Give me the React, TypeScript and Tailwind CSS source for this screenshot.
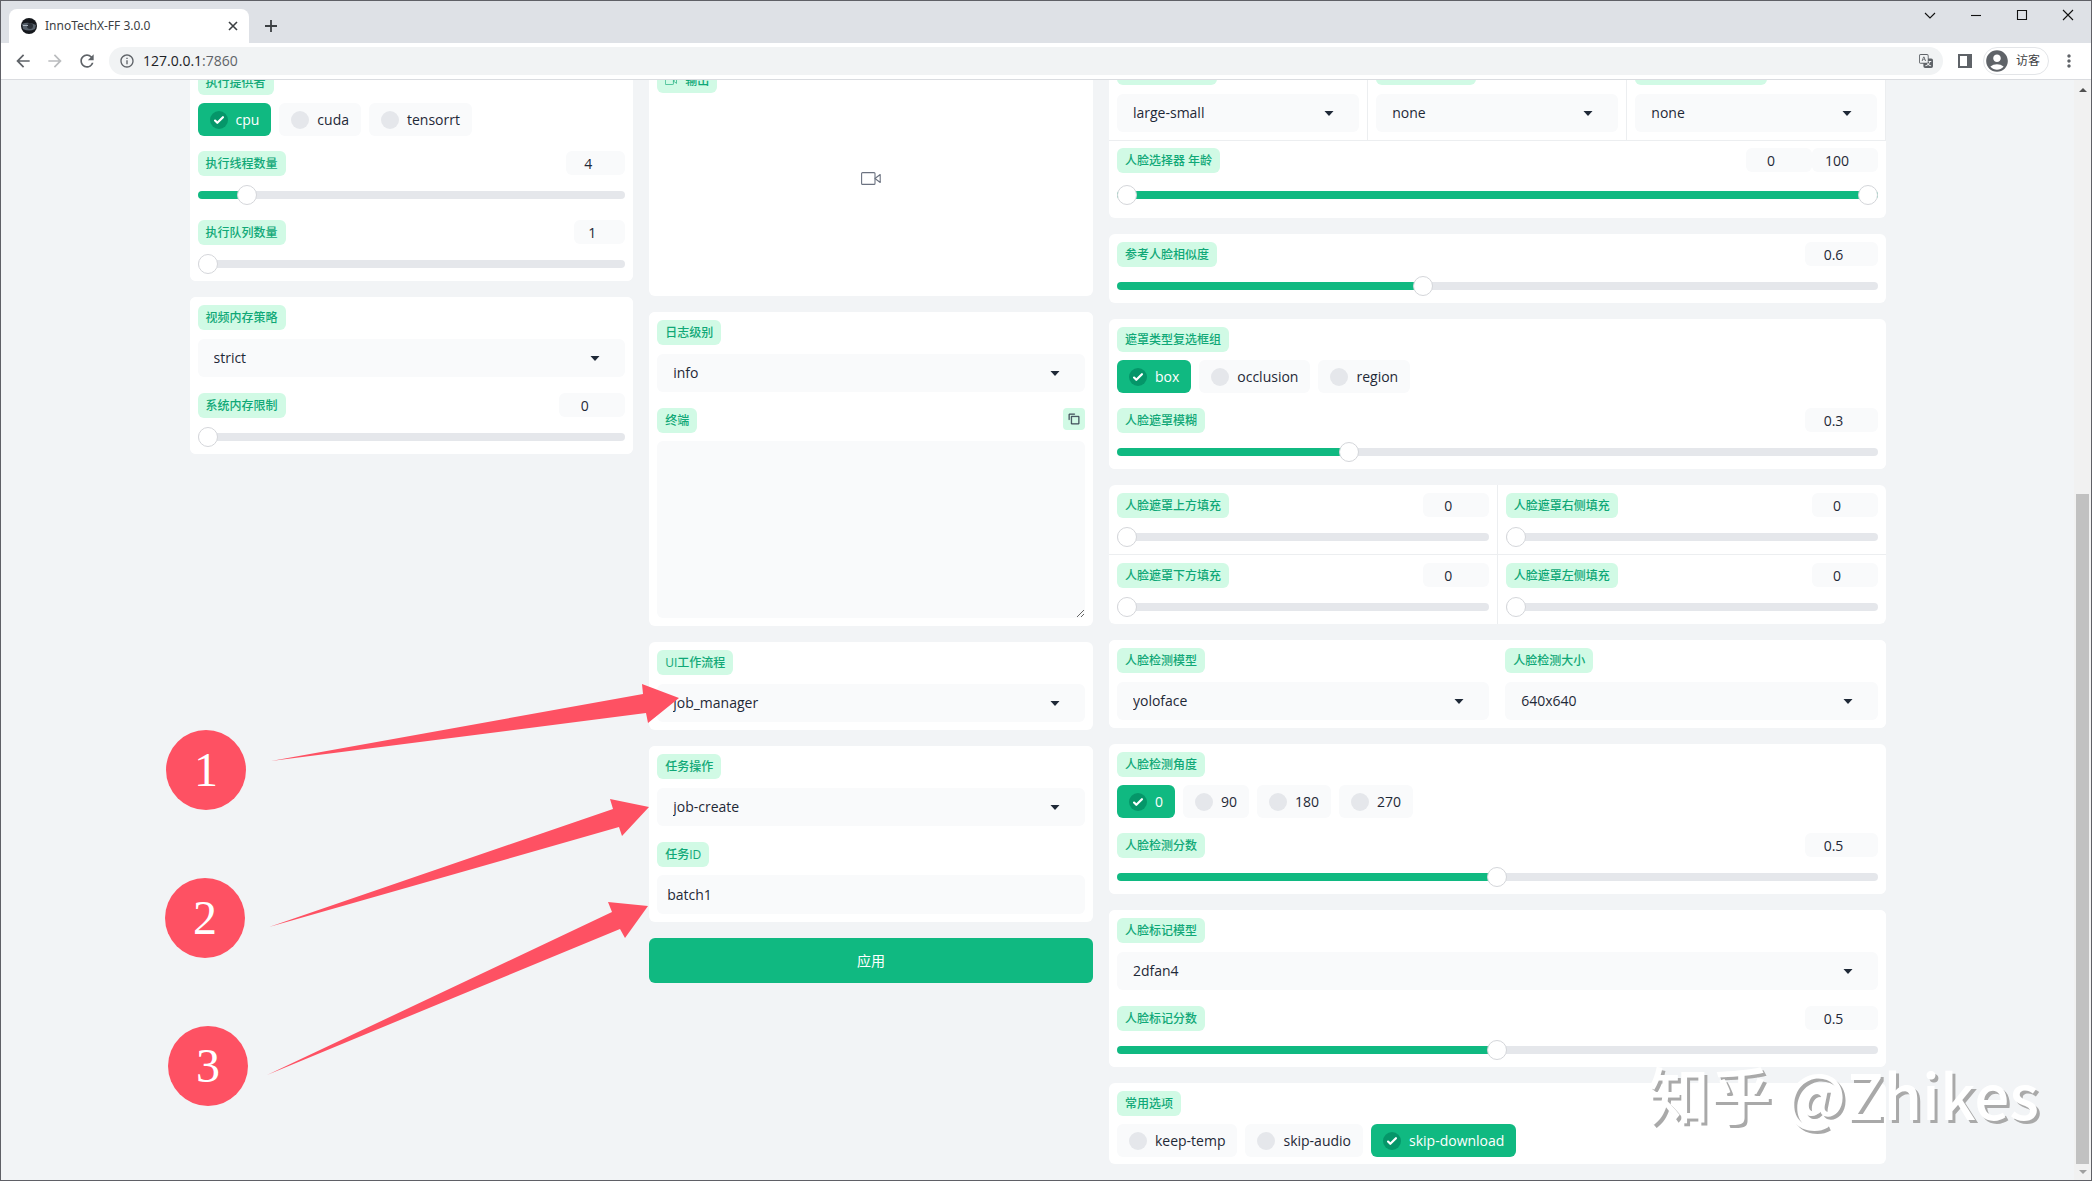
import { ReactNode, useId, useState } from "react"
import { BsTranslate } from "react-icons/bs"
import { MdAccountCircle, MdArrowBack, MdArrowForward, MdInfoOutline, MdMoreVert, MdRefresh } from "react-icons/md"

const App = () => {
    return <div className="relative flex h-screen flex-col overflow-hidden border border-[#5f6066] bg-[#f2f4f6] font-['Open_Sans','Noto_Sans_CJK_SC',sans-serif] text-sm text-[#1f2937]">
        <TabStrip />
        <Toolbar />
        <div className="flex min-h-0 flex-1">
            <main className="min-w-0 flex-1 overflow-hidden px-4">
                <div className="mx-auto grid max-w-[1696px] grid-cols-[4fr_4fr_7fr] items-start gap-4">
                    <ExecutionColumn />
                    <OutputColumn />
                    <FaceColumn />
                </div>
            </main>
            <ScrollBar />
        </div>
        <Annotations />
        <Watermark />
    </div>
}

const TabStrip = () => {
    return <header className="flex h-[42px] shrink-0 items-end justify-between bg-[#dee1e6]">
        <div className="flex items-center pl-2">
            <div className="flex h-[34px] w-60 items-center rounded-t-lg bg-white pr-2 pl-3 text-xs text-[#3c4043]">
                <svg viewBox="0 0 16 16" className="size-4">
                    <circle cx="8" cy="8" r="8" fill="#15181d" />
                    <path d="M1 6q6-3 14 1l-1 4q-6 3-12 0z" fill="#56606b" />
                    <circle cx="9" cy="8" r="3" fill="#2a3038" />
                    <path d="M2 7h5v1H2z" fill="#aab4bf" />
                </svg>
                <span className="flex-1 pl-2 font-['Noto_Sans',sans-serif]">InnoTechX-FF 3.0.0</span>
                <button aria-label="Close tab" className="flex size-4 items-center justify-center">
                    <svg viewBox="0 0 10 10" className="size-2.5" stroke="#3c4043" strokeWidth="1.6">
                        <path d="M1 1l8 8M9 1l-8 8" />
                    </svg>
                </button>
            </div>
            <button aria-label="New tab" className="ml-4 flex size-3 items-center justify-center">
                <svg viewBox="0 0 12 12" className="size-3" stroke="#3c4043" strokeWidth="1.8">
                    <path d="M6 0v12M0 6h12" />
                </svg>
            </button>
        </div>
        <div className="flex self-start">
            <WindowButton label="Search tabs" d="M1 4l5 5 5-5" />
            <WindowButton label="Minimize" d="M1 6.5h10" />
            <WindowButton label="Maximize" d="M1.5 1.5h9v9h-9z" />
            <WindowButton label="Close" d="M1 1l10 10M11 1L1 11" />
        </div>
    </header>
}

const WindowButton = ({ label, d }: { label: string, d: string }) => {
    return <button aria-label={label} className="flex h-7 w-[46px] items-center justify-center">
        <svg viewBox="0 0 12 12" className="size-3" fill="none" stroke="#111111" strokeWidth="1.1">
            <path d={d} />
        </svg>
    </button>
}

const Toolbar = () => {
    return <div className="flex h-[37px] shrink-0 items-center border-b border-[#dadce0] bg-white pr-2 pl-1.5 text-[#5f6368]">
        <button aria-label="Back" className="flex w-8 justify-center"><MdArrowBack className="size-5" /></button>
        <button aria-label="Forward" className="flex w-8 justify-center text-[#babcbe]"><MdArrowForward className="size-5" /></button>
        <button aria-label="Reload" className="flex w-8 justify-center"><MdRefresh className="size-5" /></button>
        <div className="ml-1.5 flex h-7 flex-1 items-center rounded-full bg-[#f1f3f4] px-2.5">
            <MdInfoOutline className="size-4" />
            <p className="flex-1 pl-2"><span className="text-[#202124]">127.0.0.1</span>:7860</p>
            <button aria-label="Translate"><BsTranslate className="size-3.5" /></button>
        </div>
        <button aria-label="Side panel" className="ml-1.5 flex w-8 justify-center">
            <svg viewBox="0 0 14 14" className="size-3.5" fill="currentColor">
                <path d="M0 0h14v14H0zM2 2v10h7V2z" fillRule="evenodd" />
            </svg>
        </button>
        <button className="ml-0.5 flex h-7 items-center gap-1.5 rounded-full border border-[#e3e5e8] pr-2 text-xs text-[#3c4043]">
            <MdAccountCircle className="size-[26px] text-[#5f6368]" />
            访客
        </button>
        <button aria-label="Menu" className="ml-1.5 flex w-7 justify-center"><MdMoreVert className="size-5" /></button>
    </div>
}

const ScrollBar = () => {
    return <div className="flex w-[17px] flex-col items-center bg-[#f1f1f1]">
        <svg viewBox="0 0 8 4" className="mt-2 h-1 w-2" fill="#505050"><path d="M0 4l4-4 4 4z" /></svg>
        <div className="min-h-0 flex-[402]" />
        <div className="min-h-0 w-[13px] flex-[669] bg-[#c1c1c1]" />
        <svg viewBox="0 0 8 4" className="my-1.5 h-1 w-2" fill="#a0a0a0"><path d="M0 0l4 4 4-4z" /></svg>
    </div>
}

const ExecutionColumn = () => {
    return <div className="-mt-[18px] flex flex-col gap-4">
        <Card>
            <Options title="执行提供者" items={["cpu", "cuda", "tensorrt"]} selected="cpu" />
            <Slider title="执行线程数量" initial={4} min={1} max={32} numberWidth="w-[59px]" />
            <Slider title="执行队列数量" initial={1} min={1} max={4} numberWidth="w-[51px]" />
        </Card>
        <Card>
            <Dropdown title="视频内存策略" value="strict" />
            <Slider title="系统内存限制" initial={0} min={0} max={128} numberWidth="w-[66px]" />
        </Card>
    </div>
}

const OutputColumn = () => {
    return <div className="-mt-5 flex flex-col gap-4">
        <Card>
            <div className="relative flex h-[236px] items-center justify-center text-[#6b7280]">
                <div className="absolute top-2 left-2 flex h-[25px] items-center gap-2 rounded-md bg-[#d1fae5] px-2 text-xs font-medium text-[#10a877]">
                    <VideoIcon className="h-2 w-3" />
                    输出
                </div>
                <VideoIcon className="h-[13px] w-5" />
            </div>
        </Card>
        <Card>
            <Dropdown title="日志级别" value="info" />
            <Terminal />
        </Card>
        <Card>
            <Dropdown title="UI工作流程" value="job_manager" />
        </Card>
        <Card>
            <Dropdown title="任务操作" value="job-create" />
            <TextField title="任务ID" value="batch1" />
        </Card>
        <button className="h-[45px] rounded-md bg-[#10b981] text-white">应用</button>
    </div>
}

const FaceColumn = () => {
    return <div className="-mt-7 flex flex-col gap-4">
        <Card>
            <div className="grid grid-cols-3 gap-px bg-[#eceef0]">
                <Dropdown title="人脸选择器顺序" value="large-small" />
                <Dropdown title="人脸选择器性别" value="none" />
                <Dropdown title="人脸选择器 种族/民族" value="none" />
            </div>
            <RangeSlider title="人脸选择器 年龄" />
        </Card>
        <Card>
            <Slider title="参考人脸相似度" initial={0.6} min={0} max={1.5} step={0.05} />
        </Card>
        <Card>
            <Options title="遮罩类型复选框组" items={["box", "occlusion", "region"]} selected="box" />
            <Slider title="人脸遮罩模糊" initial={0.3} min={0} max={1} step={0.05} />
        </Card>
        <Card>
            <div className="grid grid-cols-2 gap-px bg-[#eceef0]">
                <Slider title="人脸遮罩上方填充" initial={0} min={0} max={100} numberWidth="w-[66px]" />
                <Slider title="人脸遮罩右侧填充" initial={0} min={0} max={100} numberWidth="w-[66px]" />
                <Slider title="人脸遮罩下方填充" initial={0} min={0} max={100} numberWidth="w-[66px]" />
                <Slider title="人脸遮罩左侧填充" initial={0} min={0} max={100} numberWidth="w-[66px]" />
            </div>
        </Card>
        <Card>
            <div className="grid grid-cols-2">
                <Dropdown title="人脸检测模型" value="yoloface" />
                <Dropdown title="人脸检测大小" value="640x640" />
            </div>
        </Card>
        <Card>
            <Options title="人脸检测角度" items={["0", "90", "180", "270"]} selected="0" />
            <Slider title="人脸检测分数" initial={0.5} min={0} max={1} step={0.05} />
        </Card>
        <Card>
            <Dropdown title="人脸标记模型" value="2dfan4" />
            <Slider title="人脸标记分数" initial={0.5} min={0} max={1} step={0.05} />
        </Card>
        <Card>
            <Options title="常用选项" items={["keep-temp", "skip-audio", "skip-download"]} selected="skip-download" />
        </Card>
    </div>
}

const Card = ({ children }: { children: ReactNode }) => {
    return <section className="overflow-hidden rounded-md bg-white">{children}</section>
}

const Chip = ({ children, htmlFor }: { children: ReactNode, htmlFor?: string }) => {
    const style = "flex h-[25px] w-fit items-center rounded-md bg-[#d1fae5] px-2 text-xs font-medium text-[#10a877]"
    if (!htmlFor) return <span className={style}>{children}</span>
    return <label htmlFor={htmlFor} className={style}>{children}</label>
}

const Options = ({ title, items, selected }: { title: string, items: string[], selected: string }) => {
    return <div role="group" aria-label={title} className="px-2 pt-2 pb-[7px]">
        <Chip>{title}</Chip>
        <div className="mt-2 flex gap-2">
            {items.map(item => <label key={item} className="flex h-[33px] items-center gap-2 rounded-md bg-[#f9fafb] px-3 has-checked:bg-[#10b981] has-checked:text-white">
                <span className="grid place-items-center">
                    <input type="checkbox" defaultChecked={item === selected} className="peer col-start-1 row-start-1 size-[18px] appearance-none rounded-full bg-[#e5e7eb] checked:bg-[#059669]" />
                    <svg viewBox="0 0 16 16" className="pointer-events-none invisible col-start-1 row-start-1 size-[18px] peer-checked:visible" fill="white">
                        <path d="M12.207 4.793a1 1 0 010 1.414l-5 5a1 1 0 01-1.414 0l-2-2a1 1 0 011.414-1.414L6.5 9.086l4.293-4.293a1 1 0 011.414 0z" />
                    </svg>
                </span>
                {item}
            </label>)}
        </div>
    </div>
}

const thumb = "[&::-webkit-slider-thumb]:size-5 [&::-webkit-slider-thumb]:appearance-none [&::-webkit-slider-thumb]:rounded-full [&::-webkit-slider-thumb]:border [&::-webkit-slider-thumb]:border-[#d4d6da] [&::-webkit-slider-thumb]:bg-white"

const Slider = ({
    title,
    initial,
    min,
    max,
    step = 1,
    numberWidth = "w-[73px]"
}: {
    title: string,
    initial: number,
    min: number,
    max: number,
    step?: number,
    numberWidth?: string
}) => {
    const id = useId()
    const [value, setValue] = useState(initial)
    const percent = (value - min) / (max - min) * 100
    return <div className="bg-white px-2 pt-2 pb-[7px]">
        <div className="flex justify-between">
            <Chip htmlFor={id}>{title}</Chip>
            <input type="number" aria-label={title} min={min} max={max} step={step} value={value} onChange={e => setValue(Number(e.target.value))} className={`${numberWidth} h-6 rounded-md bg-[#f9fafb] text-center`} />
        </div>
        <input
            id={id}
            type="range"
            min={min}
            max={max}
            step={step}
            value={value}
            onChange={e => setValue(Number(e.target.value))}
            style={{ "--track": `linear-gradient(to right, #10b981 ${percent}%, #e5e7eb ${percent}%)` } as React.CSSProperties}
            className={`mt-[9px] block h-5 w-full appearance-none bg-transparent [&::-webkit-slider-runnable-track]:h-2 [&::-webkit-slider-runnable-track]:rounded-full [&::-webkit-slider-runnable-track]:bg-[image:var(--track)] [&::-webkit-slider-thumb]:-mt-1.5 ${thumb}`}
        />
    </div>
}

const RangeSlider = ({ title }: { title: string }) => {
    const [low, setLow] = useState(0)
    const [high, setHigh] = useState(100)
    const range = `pointer-events-none absolute inset-0 h-5 w-full appearance-none bg-transparent [&::-webkit-slider-thumb]:pointer-events-auto ${thumb}`
    return <div className="border-t border-[#eceef0] px-2 pt-[7px] pb-[13px]">
        <div className="flex">
            <Chip>{title}</Chip>
            <input type="number" aria-label={`${title} min`} value={low} onChange={e => setLow(Number(e.target.value))} className="ml-auto h-6 w-[66px] rounded-md bg-[#f9fafb] text-center" />
            <input type="number" aria-label={`${title} max`} value={high} onChange={e => setHigh(Number(e.target.value))} className="h-6 w-[66px] rounded-md bg-[#f9fafb] text-center" />
        </div>
        <div className="relative mt-3 flex h-5 items-center">
            <div className="h-2 w-full rounded-full bg-[#e5e7eb]">
                <div className="h-2 rounded-full bg-[#10b981]" style={{ marginLeft: `${low}%`, width: `${high - low}%` }} />
            </div>
            <input type="range" aria-label={`${title} min`} value={low} onChange={e => setLow(Number(e.target.value))} className={range} />
            <input type="range" aria-label={`${title} max`} value={high} onChange={e => setHigh(Number(e.target.value))} className={range} />
        </div>
    </div>
}

const Dropdown = ({ title, value }: { title: string, value: string }) => {
    const id = useId()
    return <div className="bg-white p-2">
        <Chip htmlFor={id}>{title}</Chip>
        <div className="mt-[9px] grid items-center">
            <select id={id} className="col-start-1 row-start-1 h-[38px] w-full appearance-none rounded-md bg-[#f9fafb] px-4">
                <option>{value}</option>
            </select>
            <svg viewBox="0 0 10 5" className="pointer-events-none col-start-1 row-start-1 mr-[25px] h-[5px] w-2.5 justify-self-end" fill="#1f2937">
                <path d="M0.5 0h9L5 5z" />
            </svg>
        </div>
    </div>
}

const TextField = ({ title, value }: { title: string, value: string }) => {
    const id = useId()
    return <div className="p-2">
        <Chip htmlFor={id}>{title}</Chip>
        <input id={id} type="text" defaultValue={value} className="mt-2 h-[39px] w-full rounded-md bg-[#f9fafb] px-2.5" />
    </div>
}

const Terminal = () => {
    const id = useId()
    return <div className="p-2">
        <div className="flex items-start justify-between">
            <Chip htmlFor={id}>终端</Chip>
            <button aria-label="Copy" className="flex size-[22px] items-center justify-center rounded-sm bg-[#d1fae5]">
                <svg viewBox="0 0 32 32" className="size-3" fill="#374151">
                    <path d="M28 10v18H10V10h18m0-2H10a2 2 0 0 0-2 2v18a2 2 0 0 0 2 2h18a2 2 0 0 0 2-2V10a2 2 0 0 0-2-2Z" stroke="#374151" />
                    <path d="M4 18H2V4a2 2 0 0 1 2-2h14v2H4Z" stroke="#374151" />
                </svg>
            </button>
        </div>
        <textarea id={id} readOnly className="mt-2 block h-[177px] w-full resize-y rounded-md bg-[#f9fafb] p-2.5" />
    </div>
}

const VideoIcon = ({ className }: { className: string }) => {
    return <svg viewBox="0 0 20 13" className={className} fill="none" stroke="currentColor" strokeWidth="1.1" strokeLinejoin="round">
        <rect x="0.6" y="0.6" width="13.4" height="11.8" rx="1" />
        <path d="M14 6.5l5.2-4v8z" />
    </svg>
}

// hand-drawn style callouts pointing at the three job fields
const Annotations = () => {
    return <div className="pointer-events-none absolute inset-0">
        <svg className="size-full" fill="#fe5163">
            <path d="M270 760L642 693L641 683L678 697L647 722L645 712Z" />
            <path d="M268 926L612 808L609 798L648 806L621 835L618 826Z" />
            <path d="M266 1074L611 911L607 901L647 905L624 937L619 928Z" />
        </svg>
        <Step className="top-[729px] left-[165px]">1</Step>
        <Step className="top-[877px] left-[164px]">2</Step>
        <Step className="top-[1025px] left-[167px]">3</Step>
    </div>
}

const Step = ({ className, children }: { className: string, children: ReactNode }) => {
    return <div className={`absolute flex size-20 items-center justify-center rounded-full bg-[#fe5163] font-['Liberation_Serif',serif] text-5xl text-white ${className}`}>
        {children}
    </div>
}

const Watermark = () => {
    return <p className="pointer-events-none absolute right-[52px] bottom-[42px] font-['Noto_Sans_CJK_SC',sans-serif] text-[62px] leading-[90px] font-medium text-white [text-shadow:3px_3px_0_#a9a9a9]">知乎 @Zhikes</p>
}

export default App
